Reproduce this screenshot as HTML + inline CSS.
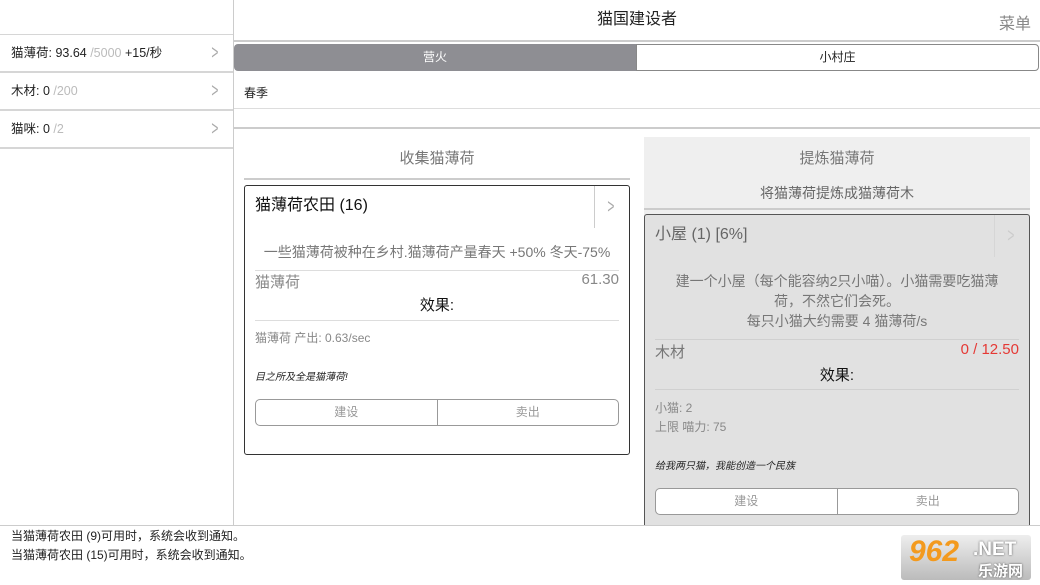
<!DOCTYPE html><html><head><meta charset="utf-8"><style>
*{margin:0;padding:0;box-sizing:border-box}
body{width:1040px;height:585px;position:relative;overflow:hidden;background:#fff;font-family:"Liberation Sans","Noto Sans CJK SC",sans-serif;color:#222}
.a{position:absolute}
.row{position:absolute;left:0;width:233px;height:38px;border-bottom:2px solid #d6d6d6;font-size:12.5px;line-height:36px;padding-left:11px}
.row .g{color:#bbb}
.chev{position:absolute;right:12px;top:0;color:#aaa;font-size:20px;transform:scaleX(.6)}
.btns{position:absolute;height:27px;border:1px solid #999;border-radius:5px;background:#fff;display:flex;font-size:12px;color:#999;line-height:25px}
.btns div{flex:1;text-align:center}
.btns div+div{border-left:1px solid #999}
</style></head><body>
<div class="a" style="left:0;top:34px;width:233px;border-top:1px solid #d6d6d6"></div>
<div class="row" style="top:35px">猫薄荷: 93.64 <span class="g">/5000</span> +15/秒<span class="chev">&gt;</span></div>
<div class="row" style="top:73px">木材: 0 <span class="g">/200</span><span class="chev">&gt;</span></div>
<div class="row" style="top:111px">猫咪: 0 <span class="g">/2</span><span class="chev">&gt;</span></div>
<div class="a" style="left:233px;top:0;width:1px;height:525px;background:#ccc"></div>
<div class="a" style="left:234px;top:0;width:806px;height:42px;border-bottom:2px solid #ccc;text-align:center;line-height:40px;font-size:16px">猫国建设者</div>
<div class="a" style="right:9px;top:10px;font-size:16px;color:#888">菜单</div>
<div class="a" style="left:234px;top:44px;width:402px;height:27px;background:#8e8e93;border-radius:4px 0 0 4px;color:#fff;font-size:12px;text-align:center;line-height:27px">营火</div>
<div class="a" style="left:636px;top:44px;width:403px;height:27px;border:1px solid #888;border-radius:0 4px 4px 0;font-size:12px;text-align:center;line-height:25px">小村庄</div>
<div class="a" style="left:244px;top:84px;font-size:12px">春季</div>
<div class="a" style="left:234px;top:108px;width:806px;border-top:1px solid #ddd"></div>
<div class="a" style="left:234px;top:127px;width:806px;border-top:2px solid #ccc"></div>
<div class="a" style="left:244px;top:147px;width:386px;text-align:center;font-size:15px;color:#777">收集猫薄荷</div>
<div class="a" style="left:244px;top:178px;width:386px;border-top:2px solid #ccc"></div>
<div class="a" style="left:244px;top:185px;width:386px;height:270px;border:1px solid #333;border-radius:3px">
 <div class="a" style="left:10px;top:10px;font-size:16px;color:#111;line-height:20px">猫薄荷农田 (16)</div>
 <div class="a" style="left:349px;top:0;width:1px;height:42px;background:#ccc"></div>
 <div class="a" style="left:360px;top:10px;color:#aaa;font-size:20px;transform:scaleX(.6)">&gt;</div>
 <div class="a" style="left:0;top:56px;width:384px;text-align:center;font-size:14px;color:#777">一些猫薄荷被种在乡村.猫薄荷产量春天 +50% 冬天-75%</div>
 <div class="a" style="left:10px;top:84px;width:364px;border-top:1px solid #ddd"></div>
 <div class="a" style="left:10px;top:85px;font-size:15px;color:#888">猫薄荷</div>
 <div class="a" style="right:10px;top:85px;font-size:15px;color:#888">61.30</div>
 <div class="a" style="left:0;top:108px;width:384px;text-align:center;font-size:15px;color:#111">效果:</div>
 <div class="a" style="left:10px;top:134px;width:364px;border-top:1px solid #ddd"></div>
 <div class="a" style="left:10px;top:143px;font-size:12px;color:#888">猫薄荷 产出: 0.63/sec</div>
 <div class="a" style="left:10px;top:182px;font-size:10px;font-style:italic">目之所及全是猫薄荷!</div>
 <div class="btns" style="left:10px;top:213px;width:364px"><div>建设</div><div>卖出</div></div>
</div>
<div class="a" style="left:644px;top:137px;width:386px;height:388px;background:#efefef"></div>
<div class="a" style="left:644px;top:147px;width:386px;text-align:center;font-size:15px;color:#777">提炼猫薄荷</div>
<div class="a" style="left:644px;top:183px;width:386px;text-align:center;font-size:14px;color:#666">将猫薄荷提炼成猫薄荷木</div>
<div class="a" style="left:644px;top:208px;width:386px;border-top:2px solid #ccc"></div>
<div class="a" style="left:644px;top:214px;width:386px;height:320px;border:1px solid #555;border-radius:3px;background:#e1e1e1">
 <div class="a" style="left:10px;top:10px;font-size:16px;color:#666;line-height:20px">小屋 (1) [6%]</div>
 <div class="a" style="left:349px;top:0;width:1px;height:42px;background:#d6d6d6"></div>
 <div class="a" style="left:360px;top:10px;color:#ccc;font-size:20px;transform:scaleX(.6)">&gt;</div>
 <div class="a" style="left:0;top:56px;width:384px;text-align:center;font-size:14px;color:#777;line-height:20px;white-space:nowrap">建一个小屋（每个能容纳2只小喵）。小猫需要吃猫薄<br>荷，不然它们会死。<br>每只小猫大约需要 4 猫薄荷/s</div>
 <div class="a" style="left:10px;top:124px;width:364px;border-top:1px solid #d0d0d0"></div>
 <div class="a" style="left:10px;top:126px;font-size:15px;color:#777">木材</div>
 <div class="a" style="right:10px;top:126px;font-size:15px;color:#e53935">0 / 12.50</div>
 <div class="a" style="left:0;top:149px;width:384px;text-align:center;font-size:15px;color:#111">效果:</div>
 <div class="a" style="left:10px;top:174px;width:364px;border-top:1px solid #d0d0d0"></div>
 <div class="a" style="left:10px;top:184px;font-size:12px;color:#888;line-height:19px">小猫: 2<br>上限 喵力: 75</div>
 <div class="a" style="left:10px;top:242px;font-size:10px;font-style:italic">给我两只猫，我能创造一个民族</div>
 <div class="btns" style="left:10px;top:273px;width:364px"><div>建设</div><div>卖出</div></div>
</div>
<div class="a" style="left:0;top:525px;width:1040px;height:60px;background:#fff;border-top:1px solid #ccc;font-size:12px;padding:1px 0 0 11px;line-height:19px">当猫薄荷农田 (9)可用时，系统会收到通知。<br>当猫薄荷农田 (15)可用时，系统会收到通知。</div>
<div class="a" style="left:901px;top:535px;width:130px;height:45px;background:linear-gradient(#eee,#bbb);border-radius:3px">
 <div class="a" style="left:8px;top:0;font-size:30px;font-weight:bold;font-style:italic;color:#f39a1e">962</div>
 <div class="a" style="left:72px;top:4px;font-size:19px;font-weight:bold;color:#fff;text-shadow:0 0 2px #555">.NET</div>
 <div class="a" style="left:77px;top:25px;font-size:15px;font-weight:bold;color:#fff;text-shadow:0 0 2px #555">乐游网</div>
</div>
</body></html>
